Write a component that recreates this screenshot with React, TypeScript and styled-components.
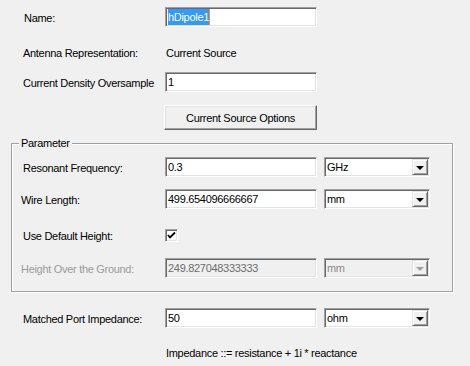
import styled, { createGlobalStyle } from 'styled-components';

const GlobalStyle = createGlobalStyle`
  html, body {
    margin: 0;
    background: #f0f0f0;
  }
  body {
    font-family: 'Liberation Sans', Arial, sans-serif;
    font-size: 11px;
    color: #000;
  }
  * {
    box-sizing: border-box;
  }
`;

const Page = styled.div`
  width: 470px;
  height: 366px;
  display: flex;
  flex-direction: column;
  background: #f0f0f0;
  letter-spacing: -0.3px;
`;

// label column + 7px gap puts the fields at x=165 on the page
const Row = styled.div<{ $mt: number; $labelWidth?: number; $h?: number }>`
  display: grid;
  grid-template-columns: ${({ $labelWidth }) => $labelWidth ?? 158}px 152px 106px;
  column-gap: 7px;
  align-items: center;
  height: ${({ $h }) => $h ?? 20}px;
  margin-top: ${({ $mt }) => $mt}px;
`;

const Label = styled.div<{ $indent?: number; $disabled?: boolean }>`
  padding-left: ${({ $indent }) => $indent ?? 23}px;
  padding-top: 1px;
  white-space: nowrap;
  color: ${({ $disabled }) => ($disabled ? '#9a9a9a' : '#000')};
`;

const StaticText = styled.div`
  padding-left: 1px;
  padding-top: 1px;
  white-space: nowrap;
  grid-column: 2 / 4;
`;

const sunken = `
  border: 1px solid;
  border-color: #a0a0a0 #ffffff #ffffff #a0a0a0;
  box-shadow: inset 1px 1px 0 #696969, inset -1px -1px 0 #e3e3e3;
`;

const TextBox = styled.div<{ $disabled?: boolean }>`
  ${sunken}
  height: 20px;
  display: flex;
  align-items: center;
  padding: 0 2px;
  background: ${({ $disabled }) => ($disabled ? '#f0f0f0' : '#fff')};
  color: ${({ $disabled }) => ($disabled ? '#6d6d6d' : '#000')};
  white-space: nowrap;
  overflow: hidden;
`;

const Selected = styled.span`
  display: inline-flex;
  align-items: center;
  height: 16px;
  background: #3399ff;
  color: #fff;
  border-right: 1px solid #ff8c1a;
`;

const Combo = styled.div<{ $disabled?: boolean }>`
  ${sunken}
  height: 20px;
  display: flex;
  align-items: center;
  justify-content: space-between;
  padding: 0 1px 0 2px;
  background: ${({ $disabled }) => ($disabled ? '#f0f0f0' : '#fff')};
  color: ${({ $disabled }) => ($disabled ? '#8a8a8a' : '#000')};
`;

const DropButton = styled.div<{ $disabled?: boolean }>`
  width: 16px;
  height: 16px;
  display: flex;
  align-items: center;
  justify-content: center;
  background: #f0f0f0;
  border: 1px solid;
  border-color: #e3e3e3 #696969 #696969 #e3e3e3;
  box-shadow: inset 1px 1px 0 #ffffff, inset -1px -1px 0 #a0a0a0;

  &::after {
    content: '';
    width: 0;
    height: 0;
    border-left: 4px solid transparent;
    border-right: 4px solid transparent;
    border-top: 4px solid ${({ $disabled }) => ($disabled ? '#a0a0a0' : '#000')};
    margin-top: 1px;
  }
`;

const Button = styled.div`
  grid-column: 2;
  width: 153px;
  height: 25px;
  display: flex;
  align-items: center;
  justify-content: center;
  background: #f0f0f0;
  border: 1px solid;
  border-color: #ffffff #696969 #696969 #ffffff;
  box-shadow: inset -1px -1px 0 #a0a0a0, inset 1px 1px 0 #e3e3e3;
  white-space: nowrap;
`;

const CheckBox = styled.div`
  ${sunken}
  width: 13px;
  height: 13px;
  background: #fff;
  display: flex;
  align-items: center;
  justify-content: center;
`;

const GroupBox = styled.div`
  position: relative;
  margin-top: 13px;
  margin-left: 11px;
  width: 442px;
  border: 1px solid #a0a0a0;
  box-shadow: inset 1px 1px 0 #ffffff, 1px 1px 0 #ffffff;
  padding: 0 0 13px 0;
`;

const Legend = styled.span`
  position: absolute;
  top: -8px;
  left: 7px;
  padding: 0 2px;
  background: #f0f0f0;
  line-height: 14px;
`;

const GroupBody = styled.div`
  display: flex;
  flex-direction: column;
  padding-top: 13px;
`;

function Dropdown({ value, disabled }: { value: string; disabled?: boolean }) {
  return (
    <Combo $disabled={disabled}>
      <span>{value}</span>
      <DropButton $disabled={disabled} />
    </Combo>
  );
}

export default function App() {
  return (
    <>
      <GlobalStyle />
      <Page>
        <Row $mt={7}>
          <Label $indent={24}>Name:</Label>
          <TextBox>
            <Selected>hDipole1</Selected>
          </TextBox>
        </Row>

        <Row $mt={15}>
          <Label>Antenna Representation:</Label>
          <StaticText>Current Source</StaticText>
        </Row>

        <Row $mt={10}>
          <Label>Current Density Oversample</Label>
          <TextBox>1</TextBox>
        </Row>

        <Row $mt={13} $h={25} $labelWidth={157}>
          <Button>Current Source Options</Button>
        </Row>

        <GroupBox>
          <Legend>Parameter</Legend>
          <GroupBody>
            <Row $mt={0} $labelWidth={146}>
              <Label $indent={11}>Resonant Frequency:</Label>
              <TextBox>0.3</TextBox>
              <Dropdown value="GHz" />
            </Row>
            <Row $mt={12} $labelWidth={146}>
              <Label $indent={9}>Wire Length:</Label>
              <TextBox>499.654096666667</TextBox>
              <Dropdown value="mm" />
            </Row>
            <Row $mt={16} $labelWidth={146}>
              <Label $indent={11}>Use Default Height:</Label>
              <CheckBox>
                <svg width="9" height="9" viewBox="0 0 9 9">
                  <path d="M1 4 L3 6.5 L8 1.5" stroke="#000" strokeWidth="1.8" fill="none" />
                </svg>
              </CheckBox>
            </Row>
            <Row $mt={13} $labelWidth={146}>
              <Label $indent={9} $disabled>
                Height Over the Ground:
              </Label>
              <TextBox $disabled>249.827048333333</TextBox>
              <Dropdown value="mm" disabled />
            </Row>
          </GroupBody>
        </GroupBox>

        <Row $mt={16}>
          <Label>Matched Port Impedance:</Label>
          <TextBox>50</TextBox>
          <Dropdown value="ohm" />
        </Row>

        <Row $mt={14}>
          <span />
          <StaticText>Impedance ::= resistance + 1i * reactance</StaticText>
        </Row>
      </Page>
    </>
  );
}
